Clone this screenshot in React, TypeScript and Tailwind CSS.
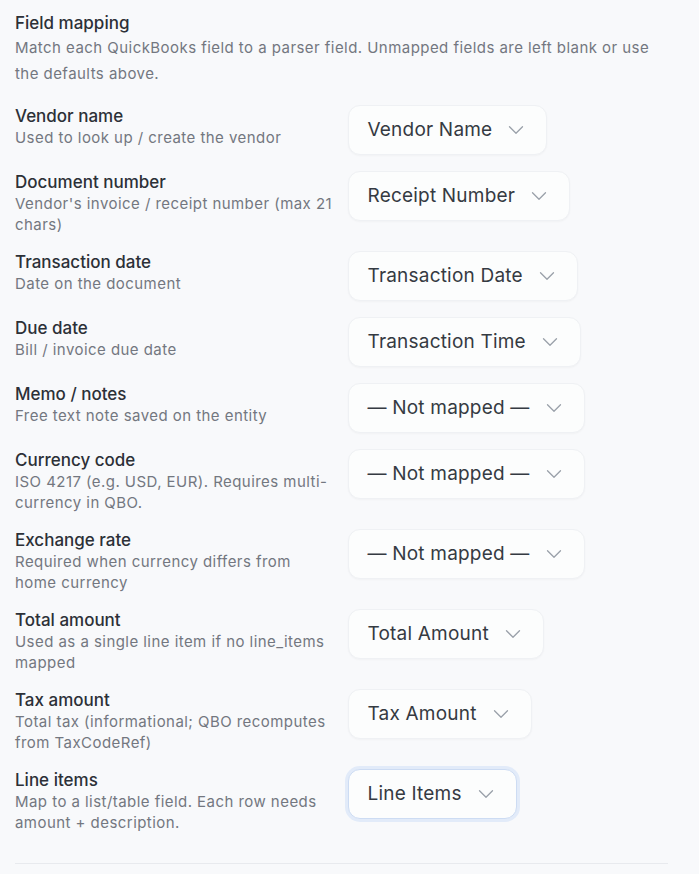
import { ChevronDown } from "lucide-react"

type Row = {
  label: string
  help: string
  value: string
  focused?: boolean
}

const rows: Row[] = [
  { label: "Vendor name", help: "Used to look up / create the vendor", value: "Vendor Name" },
  { label: "Document number", help: "Vendor's invoice / receipt number (max 21 chars)", value: "Receipt Number" },
  { label: "Transaction date", help: "Date on the document", value: "Transaction Date" },
  { label: "Due date", help: "Bill / invoice due date", value: "Transaction Time" },
  { label: "Memo / notes", help: "Free text note saved on the entity", value: "— Not mapped —" },
  { label: "Currency code", help: "ISO 4217 (e.g. USD, EUR). Requires multi-currency in QBO.", value: "— Not mapped —" },
  { label: "Exchange rate", help: "Required when currency differs from home currency", value: "— Not mapped —" },
  { label: "Total amount", help: "Used as a single line item if no line_items mapped", value: "Total Amount" },
  { label: "Tax amount", help: "Total tax (informational; QBO recomputes from TaxCodeRef)", value: "Tax Amount" },
  { label: "Line items", help: "Map to a list/table field. Each row needs amount + description.", value: "Line Items", focused: true },
]

function FieldSelect({ value, focused }: { value: string; focused?: boolean }) {
  return (
    <div
      className={`inline-flex h-[50px] items-center gap-[11px] rounded-[12px] border bg-[#fcfdfd] pl-[19px] pr-[17px] text-[19px] tracking-[0.2px] text-[#353a42] ${
        focused
          ? "border-[#cddcf3] shadow-[0_0_0_3px_#e2ebf9]"
          : "border-[#eff1f4] shadow-[0_1px_2px_rgba(16,24,40,0.03)]"
      }`}
    >
      <span>{value}</span>
      <ChevronDown size={26} strokeWidth={1.2} className="text-[#9aa0a9]" />
    </div>
  )
}

export default function App() {
  return (
    <div className="min-h-[874px] bg-[#f8f9fb] pl-[15px] pr-[31px] pt-[11px] font-['Inter',sans-serif] antialiased">
      <div>
        <h2 className="text-[17px] font-medium leading-[24px] text-[#2c3037]">Field mapping</h2>
        <p className="text-[15px] leading-[26px] tracking-[0.45px] text-[#737780]">
          Match each QuickBooks field to a parser field. Unmapped fields are left blank or use the defaults above.
        </p>
      </div>

      <div className="mt-[18px] space-y-4">
        {rows.map((row) => (
          <div key={row.label} className="grid grid-cols-2 items-start gap-x-3">
            <div>
              <div className="text-[17px] font-medium leading-[22px] text-[#2c3037]">{row.label}</div>
              <div className="text-[15px] leading-[21px] tracking-[0.45px] text-[#737780]">{row.help}</div>
            </div>
            <div>
              <FieldSelect value={row.value} focused={row.focused} />
            </div>
          </div>
        ))}
      </div>

      <div className="mt-[30px] border-t border-[#e8eaee]" />
    </div>
  )
}
